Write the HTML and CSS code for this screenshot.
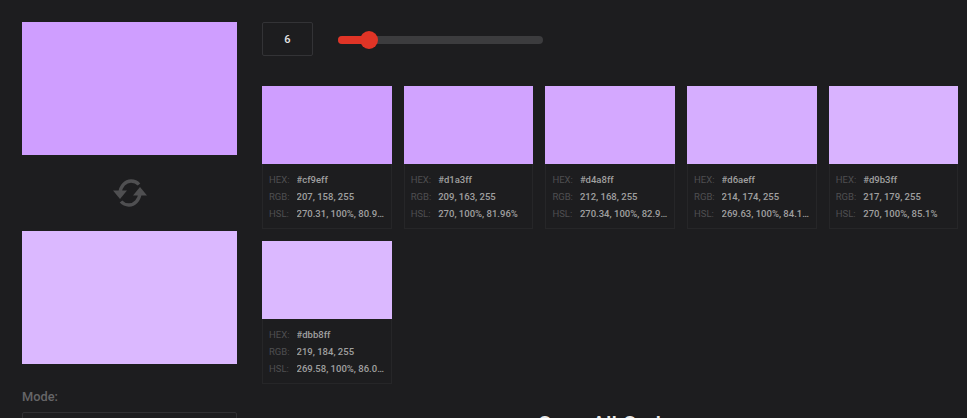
FILE: index.html
```html
<!DOCTYPE html>
<html lang="en">
<head>
<meta charset="utf-8">
<title>Color Shades</title>
<link rel="stylesheet" href="styles.css">
</head>
<body>
<main class="page">
  <aside class="side">
    <div class="big big-a"></div>
    <div class="swap">
      <svg class="swap-icon" viewBox="0 0 34 28" width="34" height="28" aria-hidden="true">
        <path d="M7 14C7.500 7 12.500 2 18 2c3.200 0 6 1.200 8 3.500" class="ln"/>
        <path d="M27 14C26.500 21 21.500 26 16 26c-3.200 0-6-1.200-8-3.500" class="ln"/>
        <path d="M0 11.500H14L7 20Z" class="fl"/>
        <path d="M34 16.500H20L27 8Z" class="fl"/>
      </svg>
    </div>
    <div class="big big-b"></div>
    <div class="mode-label">Mode:</div>
    <div class="mode-select"></div>
  </aside>
  <section class="content">
    <div class="controls">
      <div class="count">6</div>
      <div class="slider"><div class="slider-fill"></div><div class="slider-thumb"></div></div>
    </div>
    <div class="grid">
      <article class="card">
        <div class="sw s1"></div>
        <dl class="info">
          <div class="row"><dt>HEX:</dt><dd>#cf9eff</dd></div>
          <div class="row"><dt>RGB:</dt><dd>207, 158, 255</dd></div>
          <div class="row"><dt>HSL:</dt><dd>270.31, 100%, 80.98%</dd></div>
        </dl>
      </article>
      <article class="card">
        <div class="sw s2"></div>
        <dl class="info">
          <div class="row"><dt>HEX:</dt><dd>#d1a3ff</dd></div>
          <div class="row"><dt>RGB:</dt><dd>209, 163, 255</dd></div>
          <div class="row"><dt>HSL:</dt><dd>270, 100%, 81.96%</dd></div>
        </dl>
      </article>
      <article class="card">
        <div class="sw s3"></div>
        <dl class="info">
          <div class="row"><dt>HEX:</dt><dd>#d4a8ff</dd></div>
          <div class="row"><dt>RGB:</dt><dd>212, 168, 255</dd></div>
          <div class="row"><dt>HSL:</dt><dd>270.34, 100%, 82.94%</dd></div>
        </dl>
      </article>
      <article class="card">
        <div class="sw s4"></div>
        <dl class="info">
          <div class="row"><dt>HEX:</dt><dd>#d6aeff</dd></div>
          <div class="row"><dt>RGB:</dt><dd>214, 174, 255</dd></div>
          <div class="row"><dt>HSL:</dt><dd>269.63, 100%, 84.12%</dd></div>
        </dl>
      </article>
      <article class="card">
        <div class="sw s5"></div>
        <dl class="info">
          <div class="row"><dt>HEX:</dt><dd>#d9b3ff</dd></div>
          <div class="row"><dt>RGB:</dt><dd>217, 179, 255</dd></div>
          <div class="row"><dt>HSL:</dt><dd>270, 100%, 85.1%</dd></div>
        </dl>
      </article>
      <article class="card">
        <div class="sw s6"></div>
        <dl class="info">
          <div class="row"><dt>HEX:</dt><dd>#dbb8ff</dd></div>
          <div class="row"><dt>RGB:</dt><dd>219, 184, 255</dd></div>
          <div class="row"><dt>HSL:</dt><dd>269.58, 100%, 86.08%</dd></div>
        </dl>
      </article>
    </div>
    <h2 class="next-title">Copy All Codes</h2>
  </section>
</main>
</body>
</html>
```
FILE: styles.css
```css
* { box-sizing: border-box; }
html, body { margin: 0; height: 100%; overflow: hidden; background: #1d1d1f; }
body { font-family: Roboto, "Liberation Sans", sans-serif; color: #9b9b9b; }
.page { display: flex; gap: 25px; padding: 22px 0 0 22px; width: 967px; height: 418px; overflow: hidden; }
.side { width: 215px; flex: none; }
.big { height: 132.700px; }
.big-a { background: #cf9eff; }
.big-b { background: #dbb8ff; }
.swap { height: 76.500px; display: flex; align-items: center; justify-content: center; }
.ln { fill: none; stroke: #4f4f51; stroke-width: 3.4; }
.fl { fill: #4f4f51; }
.mode-label { margin-top: 25px; font-size: 12.800px; font-weight: 500; line-height: 16px; color: #666668; }
.mode-select { margin-top: 7px; height: 40px; border: 1px solid #303033; border-radius: 2px; }
.content { flex: none; width: 697px; }
.controls { display: flex; align-items: center; gap: 25px; height: 34px; }
.count { width: 51px; height: 34px; border: 1px solid #333336; border-radius: 2px; display: flex; align-items: center; justify-content: center; font-size: 11px; font-weight: 500; color: #e6e6e6; }
.slider { position: relative; width: 205px; height: 8px; margin-top: 1px; border-radius: 4px; background: #3c3c3e; }
.slider-fill { width: 31px; height: 8px; border-radius: 4px; background: #e03426; }
.slider-thumb { position: absolute; left: 22px; top: -5px; width: 18px; height: 18px; border-radius: 50%; background: #e03426; }
.grid { display: grid; grid-template-columns: repeat(5, 129.700px); column-gap: 12px; row-gap: 12px; margin-top: 30px; }
.card { border: 1px solid #262628; border-top: 0; height: 143px; }
.sw { height: 78px; margin: 0 -1px; }
.s1 { background: #cf9eff; } .s2 { background: #d1a3ff; } .s3 { background: #d4a8ff; }
.s4 { background: #d6aeff; } .s5 { background: #d9b3ff; } .s6 { background: #dbb8ff; }
.info { margin: 0; padding: 7px 3px 0 6px; font-size: 9.500px; line-height: 17px; }
.row { display: flex; }
dt { width: 27.500px; flex: none; color: #4f4f51; }
dd { margin: 0; min-width: 0; flex: 1; font-weight: 500; color: #a0a0a0; white-space: nowrap; overflow: hidden; text-overflow: ellipsis; }
.next-title { margin: 28px 0 0; text-align: center; font-size: 21.600px; line-height: 26px; font-weight: 500; color: #e6e6e6; }
```
